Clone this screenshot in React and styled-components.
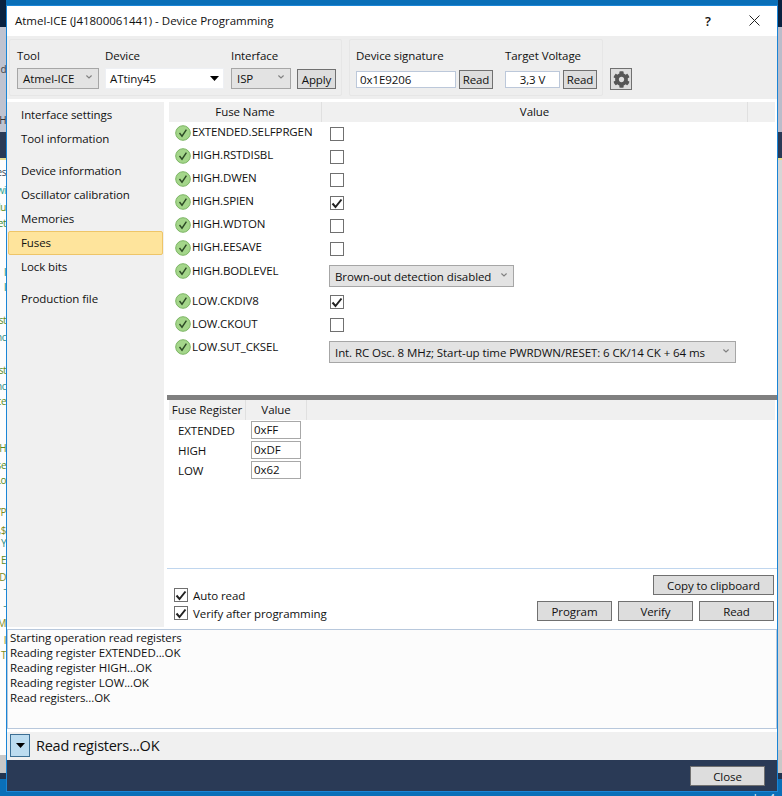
import React from "react";
import styled, { createGlobalStyle } from "styled-components";
import { FaCog } from "react-icons/fa";

const GlobalStyle = createGlobalStyle`
  html, body { margin: 0; padding: 0; }
  body { font-family: "Open Sans", "Noto Sans", sans-serif; font-size: 11.5px; letter-spacing: -0.08px; color: #111; }
  * { box-sizing: border-box; }
`;

const Desktop = styled.div`
  position: relative;
  width: 782px;
  height: 796px;
  overflow: hidden;
  padding: 5px 4px 0 6px;
  background-color: #0a6fb8;
  background-repeat: no-repeat;
  background-size: 6px 100%, 4px 100%;
  background-position: left top, right top;
  background-image:
    linear-gradient(to bottom, #0a2240 0 27px, #bfc3d0 27px 132px, #2a3a56 132px 158px, #e8dc90 158px 160px, #fdfdfd 160px 755px, #c8c8c8 755px 773px, #22344f 773px 779px, #0a6fb8 779px),
    linear-gradient(to bottom, #0a2240 0 27px, #babcca 27px 132px, #2a3a56 132px 158px, #e8dc90 158px 160px, #d6d6d6 160px 750px, #c8c8c8 750px 773px, #22344f 773px 779px, #0a6fb8 779px);
`;

const Sliver = styled.div`
  position: absolute;
  left: 0;
  top: ${(p) => p.$y - 7}px;
  width: 6px;
  height: 14px;
  overflow: hidden;
  direction: rtl;
  white-space: nowrap;
  font: 10px/14px "Open Sans", sans-serif;
  letter-spacing: -0.5px;
  color: ${(p) => p.$color};
`;

const TaskbarText = styled.div`
  position: absolute;
  right: 7px;
  top: 791px;
  font-size: 11px;
  line-height: 14px;
  color: #e8f2fa;
`;

const Window = styled.div`
  position: relative;
  width: 772px;
  height: 787px;
  display: flex;
  flex-direction: column;
  background: #fff;
  border: 1px solid #1a85d6;
`;

const TitleBar = styled.div`
  height: 30px;
  flex: none;
  display: flex;
  align-items: center;
  padding: 0 0 1px 8px;
`;

const Title = styled.div`
  flex: 1;
  letter-spacing: 0;
`;

const CaptionButton = styled.div`
  width: 46px;
  height: 29px;
  display: flex;
  align-items: center;
  justify-content: center;
  font-size: 13px;
  font-weight: 600;
`;

const Toolbar = styled.div`
  height: 63px;
  flex: none;
  display: flex;
  align-items: flex-start;
  gap: 7px;
  padding: 3px 0 0 2px;
  background: #eeeeee;
`;

const Panel = styled.div`
  height: 57px;
  display: flex;
  align-items: flex-end;
  gap: ${(p) => p.$gap}px;
  padding: 0 ${(p) => p.$right}px 6px ${(p) => p.$left}px;
  border: 1px solid #e6e6e6;
  border-radius: 2px;
`;

const Field = styled.div`
  display: flex;
  flex-direction: column;
  width: ${(p) => p.$w}px;
  margin-left: ${(p) => p.$lead || 0}px;
`;

const FieldLabel = styled.div`
  height: 16px;
  line-height: 16px;
  margin-bottom: ${(p) => p.$after}px;
  white-space: nowrap;
`;

const InlineControls = styled.div`
  display: flex;
  align-items: center;
  gap: 3px;
  height: 19px;
`;

const Combo = styled.div`
  display: flex;
  align-items: center;
  justify-content: space-between;
  width: ${(p) => p.$w}px;
  height: ${(p) => p.$h}px;
  padding: 0 6px 0 5px;
  background: #e3e3e3;
  border: 1px solid #a6a6a6;
  white-space: nowrap;
`;

const ChevronMark = styled.svg`
  flex: none;
  margin-bottom: 3px;
`;

const DeviceCombo = styled.div`
  display: flex;
  align-items: center;
  justify-content: space-between;
  width: 119px;
  height: 21px;
  padding: 0 4px 0 4px;
  background: #fff;
  border: 1px solid #eef0f4;
`;

const Button = styled.div`
  display: flex;
  flex: none;
  align-items: center;
  justify-content: center;
  width: ${(p) => p.$w}px;
  height: ${(p) => p.$h || 20}px;
  background: #dddddd;
  border: 1px solid #707070;
  white-space: nowrap;
`;

const GearButton = styled(Button)`
  width: 22px;
  height: 22px;
  margin-top: 29px;
  color: #555;
`;

const TextInput = styled.div`
  display: flex;
  align-items: center;
  justify-content: ${(p) => (p.$center ? "center" : "flex-start")};
  width: ${(p) => p.$w}px;
  height: 17px;
  padding: 0 3px;
  background: #fff;
  border: 1px solid #bcc8da;
`;

const Body = styled.div`
  height: 530px;
  flex: none;
  display: flex;
`;

const Nav = styled.div`
  width: 157px;
  height: 525px;
  margin-top: 3px;
  padding: 1px 1px 0;
  display: flex;
  flex-direction: column;
  gap: 8px;
  background: #f0f0f0;
`;

const NavGroup = styled.div`
  display: flex;
  flex-direction: column;
`;

const NavItem = styled.div`
  height: 24px;
  line-height: 21px;
  padding-left: 12px;
  border: 1px solid ${(p) => (p.$active ? "#eec568" : "transparent")};
  border-radius: 2px;
  background: ${(p) => (p.$active ? "#fee49c" : "transparent")};
`;

const Main = styled.div`
  flex: 1;
  display: flex;
  flex-direction: column;
  padding: 3px 0 0 3px;
  min-width: 0;
`;

const FusePane = styled.div`
  height: 293px;
  flex: none;
  padding: 0 2px;
`;

const HeaderBar = styled.div`
  display: flex;
  height: 20px;
  background: #f0f0f0;
`;

const HeaderCell = styled.div`
  width: ${(p) => p.$w}px;
  line-height: 20px;
  text-align: center;
  white-space: nowrap;
  border-right: 1px solid #e0e0e0;
`;

const FuseRow = styled.div`
  display: grid;
  grid-template-columns: 160px 1fr;
  height: ${(p) => p.$h}px;
  padding-top: 3px;
`;

const FuseName = styled.div`
  display: flex;
  align-items: flex-start;
  gap: 1px;
  padding-left: 6px;
  letter-spacing: -0.12px;
  line-height: 16px;
  white-space: nowrap;
`;

const FuseLabel = styled.span`
  margin-top: ${(p) => (p.$lift ? -1 : 0)}px;
`;

const StatusIcon = styled.svg`
  flex: none;
`;

const FuseValue = styled.div`
  padding-top: 2px;
  padding-left: ${(p) => p.$inset}px;
`;

const Box = styled.div`
  display: flex;
  flex: none;
  align-items: center;
  justify-content: center;
  width: 14px;
  height: 14px;
  background: #fff;
  border: 1px solid #707070;
`;

const Splitter = styled.div`
  height: 5px;
  flex: none;
  background: #808080;
`;

const RegisterPane = styled.div`
  height: 168px;
  flex: none;
  padding: 0 2px;
`;

const RegisterRow = styled.div`
  display: flex;
  align-items: center;
  height: 20px;
  padding-left: 9px;
`;

const RegisterName = styled.div`
  width: 73px;
`;

const RegisterInput = styled.div`
  width: 50px;
  height: 18px;
  line-height: 15px;
  padding-left: 2px;
  background: #fff;
  border: 1px solid #a8a8a8;
`;

const Actions = styled.div`
  flex: 1;
  display: flex;
  justify-content: space-between;
  padding: 6px 3px 8px 7px;
  border-top: 1px solid #c0d6ee;
`;

const Checks = styled.div`
  display: flex;
  flex-direction: column;
  justify-content: flex-end;
  gap: 4px;
  padding-bottom: 1px;
`;

const CheckLine = styled.div`
  display: flex;
  align-items: center;
  gap: 5px;
  height: 14px;
`;

const ActionButtons = styled.div`
  display: flex;
  flex-direction: column;
  align-items: flex-end;
  gap: 6px;
`;

const ButtonRow = styled.div`
  display: flex;
  gap: 6px;
`;

const Log = styled.div`
  height: 100px;
  flex: none;
  padding: 0 2px;
  background: #fcfcfc;
  border: 1px solid #b8c8dc;
  line-height: 15px;
`;

const StatusBar = styled.div`
  height: 28px;
  flex: none;
  margin-top: 3px;
  display: flex;
  align-items: center;
  gap: 6px;
  padding: 0 0 2px 3px;
  background: #f0f0f0;
  font-size: 14.5px;
  letter-spacing: -0.25px;
`;

const Expander = styled.div`
  display: flex;
  align-items: center;
  justify-content: center;
  width: 20px;
  height: 23px;
  background: #bcdcf0;
  border: 1px solid #3c6f94;
`;

const Footer = styled.div`
  flex: 1;
  display: flex;
  justify-content: flex-end;
  align-items: flex-start;
  padding: 6px 12px 0 0;
  background: #2a3a56;
`;

const Chevron = () => (
  <ChevronMark width="6" height="4" viewBox="0 0 6 4" fill="none">
    <path d="M0.4 0.5 L3 3 L5.6 0.5" stroke="#808080" strokeWidth="1.1" />
  </ChevronMark>
);

const Triangle = () => (
  <svg width="9" height="5" viewBox="0 0 9 5">
    <path d="M0 0 H9 L4.5 5 Z" fill="#000" />
  </svg>
);

const Tick = () => (
  <svg width="12" height="11" viewBox="0 0 12 11" fill="none">
    <path d="M1.5 5.5 L4.5 9 L10.5 1.5" stroke="#222" strokeWidth="2" />
  </svg>
);

const OkIcon = () => (
  <StatusIcon width="16" height="16" viewBox="0 0 16 16">
    <circle cx="8" cy="8" r="7.3" fill="#a4d68a" stroke="#7cb564" strokeWidth="1" />
    <path d="M4.5 8 L7 11.2 L11.4 4.6" fill="none" stroke="#2d4a26" strokeWidth="1.4" />
  </StatusIcon>
);

const CheckBox = ({ on }) => <Box>{on && <Tick />}</Box>;

const fuses = [
  { name: "EXTENDED.SELFPRGEN", h: 23, lift: true },
  { name: "HIGH.RSTDISBL", h: 23, lift: true },
  { name: "HIGH.DWEN", h: 23, lift: true },
  { name: "HIGH.SPIEN", h: 23, lift: true, on: true },
  { name: "HIGH.WDTON", h: 23, lift: true },
  { name: "HIGH.EESAVE", h: 23, lift: true },
  { name: "HIGH.BODLEVEL", h: 30, combo: "Brown-out detection disabled", w: 185 },
  { name: "LOW.CKDIV8", h: 23, on: true },
  { name: "LOW.CKOUT", h: 23 },
  { name: "LOW.SUT_CKSEL", h: 23, combo: "Int. RC Osc. 8 MHz; Start-up time PWRDWN/RESET: 6 CK/14 CK + 64 ms", w: 407 },
];

const slivers = [
  ["d", 69, "#444"], ["H", 120, "#333"], ["es", 172, "#345"], ["wi", 190, "#2a9d8f"],
  ["lu", 207, "#5a8a20"], ["et", 223, "#3a8a30"], ["l", 272, "#0a8a6a"], ["l", 287, "#0a8a6a"],
  ["st", 320, "#5a8a20"], ["nc", 337, "#2a8a80"], ["st", 370, "#5a8a20"], ["nc", 386, "#2a8a80"],
  ["ce", 401, "#5a8a20"], ["H", 448, "#5a8a20"], ["se", 465, "#5a8a20"], ["Lo", 480, "#5a8a20"],
  ["YP", 512, "#7a8a20"], ["$,", 530, "#7a8a20"], ["Y", 543, "#2a8a80"], ["E", 560, "#5a8a20"],
  ["ID", 577, "#7a8a20"], ["-", 588, "#2a8a80"], ["-", 605, "#2a8a80"], ["AM", 623, "#7a8a20"],
  ["I", 640, "#7a8a20"], ["T", 655, "#7a8a20"],
];

export default function App() {
  return (
    <Desktop>
      <GlobalStyle />
      {slivers.map(([t, y, c]) => (
        <Sliver key={y} $y={y} $color={c}>{t}</Sliver>
      ))}
      <TaskbarText>Ln 4</TaskbarText>
      <Window>
        <TitleBar>
          <Title>Atmel-ICE (J41800061441) - Device Programming</Title>
          <CaptionButton>?</CaptionButton>
          <CaptionButton>
            <svg width="11" height="11" viewBox="0 0 11 11" fill="none">
              <path d="M0.5 0.5 L10.5 10.5 M10.5 0.5 L0.5 10.5" stroke="#222" strokeWidth="1" />
            </svg>
          </CaptionButton>
        </TitleBar>

        <Toolbar>
          <Panel $gap={6} $left={7} $right={5}>
            <Field $w={82}>
              <FieldLabel $after={4}>Tool</FieldLabel>
              <Combo $w={82} $h={21}>Atmel-ICE <Chevron /></Combo>
            </Field>
            <Field $w={119}>
              <FieldLabel $after={4}>Device</FieldLabel>
              <DeviceCombo>ATtiny45 <Triangle /></DeviceCombo>
            </Field>
            <Field $w={60} $lead={1}>
              <FieldLabel $after={4}>Interface</FieldLabel>
              <Combo $w={60} $h={21}>ISP <Chevron /></Combo>
            </Field>
            <Button $w={39}>Apply</Button>
          </Panel>
          <Panel $gap={12} $left={6} $right={5}>
            <Field $w={137}>
              <FieldLabel $after={6}>Device signature</FieldLabel>
              <InlineControls>
                <TextInput $w={100}>0x1E9206</TextInput>
                <Button $w={34} $h={19}>Read</Button>
              </InlineControls>
            </Field>
            <Field $w={92}>
              <FieldLabel $after={6}>Target Voltage</FieldLabel>
              <InlineControls>
                <TextInput $w={55} $center>3,3 V</TextInput>
                <Button $w={34} $h={19}>Read</Button>
              </InlineControls>
            </Field>
          </Panel>
          <GearButton $w={22}><FaCog size={17} /></GearButton>
        </Toolbar>

        <Body>
          <Nav>
            <NavGroup>
              <NavItem>Interface settings</NavItem>
              <NavItem>Tool information</NavItem>
            </NavGroup>
            <NavGroup>
              <NavItem>Device information</NavItem>
              <NavItem>Oscillator calibration</NavItem>
              <NavItem>Memories</NavItem>
              <NavItem $active>Fuses</NavItem>
              <NavItem>Lock bits</NavItem>
            </NavGroup>
            <NavGroup>
              <NavItem>Production file</NavItem>
            </NavGroup>
          </Nav>

          <Main>
            <FusePane>
              <HeaderBar>
                <HeaderCell $w={153}>Fuse Name</HeaderCell>
                <HeaderCell $w={426}>Value</HeaderCell>
              </HeaderBar>
              {fuses.map(({ name, h, on, combo, w, lift }) => (
                <FuseRow key={name} $h={h}>
                  <FuseName>
                    <OkIcon />
                    <FuseLabel $lift={lift}>{name}</FuseLabel>
                  </FuseName>
                  <FuseValue $inset={combo ? 0 : 1}>
                    {combo ? <Combo $w={w} $h={22}>{combo} <Chevron /></Combo> : <CheckBox on={on} />}
                  </FuseValue>
                </FuseRow>
              ))}
            </FusePane>
            <Splitter />
            <RegisterPane>
              <HeaderBar>
                <HeaderCell $w={77}>Fuse Register</HeaderCell>
                <HeaderCell $w={61}>Value</HeaderCell>
              </HeaderBar>
              {[["EXTENDED", "0xFF"], ["HIGH", "0xDF"], ["LOW", "0x62"]].map(([n, v]) => (
                <RegisterRow key={n}>
                  <RegisterName>{n}</RegisterName>
                  <RegisterInput>{v}</RegisterInput>
                </RegisterRow>
              ))}
            </RegisterPane>
            <Actions>
              <Checks>
                <CheckLine><CheckBox on />Auto read</CheckLine>
                <CheckLine><CheckBox on />Verify after programming</CheckLine>
              </Checks>
              <ActionButtons>
                <Button $w={121}>Copy to clipboard</Button>
                <ButtonRow>
                  <Button $w={75}>Program</Button>
                  <Button $w={75}>Verify</Button>
                  <Button $w={75}>Read</Button>
                </ButtonRow>
              </ActionButtons>
            </Actions>
          </Main>
        </Body>

        <Log>
          <div>Starting operation read registers</div>
          <div>Reading register EXTENDED...OK</div>
          <div>Reading register HIGH...OK</div>
          <div>Reading register LOW...OK</div>
          <div>Read registers...OK</div>
        </Log>
        <StatusBar>
          <Expander><Triangle /></Expander>
          Read registers...OK
        </StatusBar>
        <Footer>
          <Button $w={75}>Close</Button>
        </Footer>
      </Window>
    </Desktop>
  );
}
